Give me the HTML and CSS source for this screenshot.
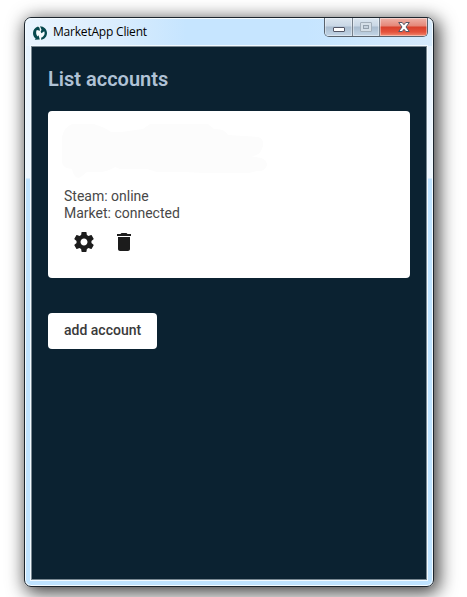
FILE: index.html
```html
<!DOCTYPE html>
<html lang="en">
<head>
  <meta charset="UTF-8">
  <meta name="viewport" content="width=device-width, initial-scale=1.0">
  <title>MarketApp Client</title>
  <link rel="stylesheet" href="styles.css">
</head>
<body>
  <div class="window">
    <header class="titlebar">
      <svg class="logo" width="14" height="14" viewBox="0 0 14 14">
        <circle cx="7" cy="7" r="7" fill="#f6fbfd"/>
        <path fill="#07494f" d="M5 .5C2 1.400 0 4 0 7c0 2.300 1 4.300 2.600 5.500L1.800 13.700l5-.2L5.500 9.300l-.9 1.200C3 8.800 2.600 6 3.800 4L7 4.800 6.500 1.800z"/>
        <path fill="#07494f" d="M7 .2c3.900 0 7 3 7 6.800 0 3.600-2.500 6.400-6 6.800l.3-2.300c2.800-.8 4-3.800 2.900-6.300L8.500 7.300 7.600 5.800l.9-2z"/>
      </svg>
      <span class="title">MarketApp Client</span>
      <div class="controls">
        <button class="control minimize" aria-label="Minimize">
          <svg width="13" height="6" viewBox="0 0 13 6">
            <rect x="1.500" y=".5" width="11" height="4" rx=".5" fill="#fff" stroke="#535666"/>
          </svg>
        </button>
        <button class="control maximize" aria-label="Maximize">
          <svg width="12" height="10" viewBox="0 0 12 10">
            <rect x=".5" y=".5" width="11" height="9" rx=".5" fill="#d5dfe8" stroke="#a3afba"/>
            <rect x="3.500" y="3.500" width="5" height="3" fill="#c5d1dd" stroke="#93a0ac"/>
          </svg>
        </button>
        <button class="control close" aria-label="Close">
          <svg width="12" height="10" viewBox="0 0 12 10">
            <path fill="#fff" stroke="#535666" d="M.7.5h3.500L6 2.700 7.800.5h3.500L8 5l3.300 4.500H7.800L6 7.300 4.200 9.500H.7L4 5z"/>
          </svg>
        </button>
      </div>
    </header>
    <main class="client">
      <h1>List accounts</h1>
      <div class="card">
        <svg class="account-name" width="206" height="56" viewBox="0 0 206 56">
          <path fill="#fcfcfc" d="M10 0h22q10 3 17 8l10 0 22-3 7-5h58l6 5q10-1 14 6l30 2q6 1 5 9l-3 7-8 4q15 0 15 8-2 7-10 6l-8 2h-45l-20-1H95l-10-3H58l-5-2q-8 5-15 5H25l-5 4q-5 5-9-3l-1-4q-10-1-10-7V13Q2 3 10 0z"/>
        </svg>
        <p>Steam: online</p>
        <p>Market: connected</p>
        <div class="actions">
          <button class="icon-button" aria-label="Settings">
            <svg width="24" height="24" viewBox="0 0 24 24">
              <path d="M19.430 12.980c.04-.32.07-.64.07-.98s-.03-.66-.07-.98l2.110-1.650c.19-.15.24-.42.12-.64l-2-3.460c-.12-.22-.39-.3-.61-.22l-2.490 1c-.52-.4-1.080-.73-1.690-.98l-.38-2.650C14.460 2.180 14.250 2 14 2h-4c-.25 0-.46.18-.49.42l-.38 2.650c-.61.25-1.170.59-1.690.98l-2.490-1c-.23-.09-.49 0-.61.22l-2 3.460c-.13.22-.07.49.12.64l2.110 1.650c-.04.32-.07.65-.07.98s.03.66.07.98l-2.110 1.650c-.19.15-.24.42-.12.64l2 3.460c.12.22.39.3.61.22l2.490-1c.52.4 1.080.73 1.690.98l.38 2.650c.03.24.24.42.49.42h4c.25 0 .46-.18.49-.42l.38-2.650c.61-.25 1.170-.59 1.690-.98l2.490 1c.23.09.49 0 .61-.22l2-3.460c.12-.22.07-.49-.12-.64l-2.110-1.650zM12 15.500c-1.930 0-3.500-1.570-3.500-3.500s1.570-3.500 3.500-3.500 3.500 1.570 3.500 3.500-1.570 3.500-3.500 3.500z"/>
            </svg>
          </button>
          <button class="icon-button" aria-label="Delete">
            <svg width="24" height="24" viewBox="0 0 24 24">
              <path d="M6 19c0 1.100.9 2 2 2h8c1.100 0 2-.9 2-2V7H6v12zM19 4h-3.500l-1-1h-5l-1 1H5v2h14V4z"/>
            </svg>
          </button>
        </div>
      </div>
      <button class="add-button">add account</button>
    </main>
  </div>
</body>
</html>
```

FILE: styles.css
```css
* {
  box-sizing: border-box;
}
body {
  margin: 0;
  height: 597px;
  padding: 17px 33px 10px 24px;
  background: #fff;
  overflow: hidden;
  font-family: Roboto, sans-serif;
}
button {
  border: none;
  padding: 0;
  font-family: inherit;
}
.window {
  display: flex;
  flex-direction: column;
  width: 410px;
  height: 570px;
  padding: 0 6px 6px;
  border: 1px solid #1c252d;
  border-radius: 7px;
  background: linear-gradient(#e4f2fe 0, #eef7ff 160px, #bfe3ff 161px);
  box-shadow: inset 0 0 0 1px #f4fbff, 3px 4px 18px 2px rgba(0, 0, 0, 0.75);
}

/* title bar */
.titlebar {
  display: flex;
  height: 28px;
  flex-shrink: 0;
  margin: 0 -5px;
  padding: 0 4px;
  border-radius: 6px 6px 0 0;
  background: linear-gradient(90deg, #eaf5ff 0, #d9ecfd 90px, #c6e5ff 160px, #c6e5ff 280px, #d5eafc 100%);
  box-shadow: inset 0 1px #f4fbff;
}
.logo {
  margin: 8px 6px 0 3px;
}
.title {
  font: 12px/28px "Open Sans", sans-serif;
  letter-spacing: -0.2px;
  color: #000;
}
.controls {
  display: flex;
  margin-left: auto;
  width: 104px;
  height: 19px;
  border: 1px solid #59636e;
  border-top: none;
  border-radius: 0 0 5px 5px;
  overflow: hidden;
}
.control {
  display: flex;
  justify-content: center;
  width: 28px;
  border-right: 1px solid #77818c;
  background: linear-gradient(#dbe6f0 0, #c9d7e5 8px, #a9bccf 9px, #c3d5e6 100%);
  box-shadow: inset 0 0 0 1px rgba(255, 255, 255, 0.4);
}
.control svg {
  margin-top: 4px;
}
.minimize svg {
  margin-top: 9px;
}
.maximize {
  width: 27px;
}
.close {
  width: 47px;
  border-right: none;
  background: linear-gradient(#eeb3a9 0, #e58677 8px, #d8402b 9px, #e4523c 14px, #f28a70 100%);
}

/* app */
.client {
  flex: 1;
  padding: 16px;
  border: 1px solid #788791;
  background: #0b2231;
  box-shadow: 0 0 0 1px #f2faff;
}
h1 {
  margin: 4px 0 20px;
  font-size: 20px;
  line-height: 24px;
  font-weight: 600;
  color: #b0c2d6;
}
.card {
  height: 167px;
  margin-bottom: 35px;
  padding: 13px 16px;
  border-radius: 4px;
  background: #fff;
  color: #484848;
}
.account-name {
  display: block;
  margin: 0 0 8px -2px;
}
.card p {
  margin: 0;
  font-size: 14px;
  line-height: 17px;
}
.actions {
  display: flex;
}
.icon-button {
  display: flex;
  align-items: center;
  justify-content: center;
  width: 40px;
  height: 40px;
  background: none;
}
.icon-button svg {
  fill: #1c1c1c;
}
.add-button {
  display: block;
  height: 36px;
  padding: 0 16px 2px;
  border-radius: 4px;
  background: #fff;
  font-size: 14px;
  font-weight: 500;
  color: #3a3a3a;
}
```
